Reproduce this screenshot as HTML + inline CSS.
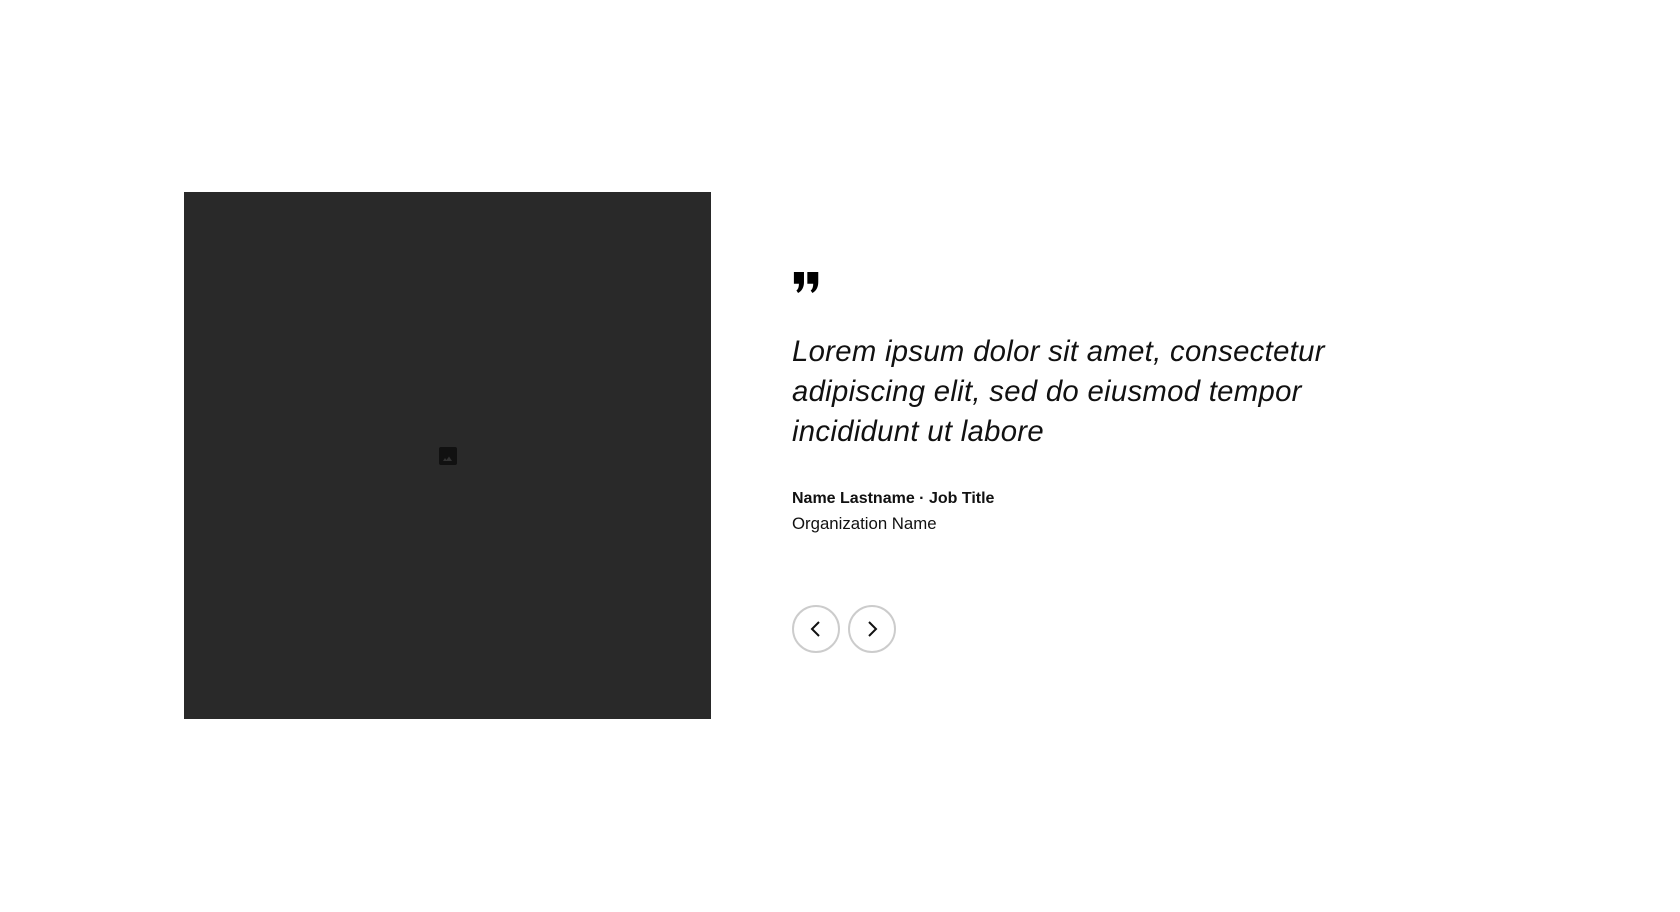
<!DOCTYPE html>
<html><head><style>
body{margin:0;width:1680px;height:912px;background:#fff;position:relative;overflow:hidden;font-family:"Liberation Sans",sans-serif;color:#111}
.box{position:absolute;left:184px;top:192px;width:527px;height:527px;background:#292929}
.ic{position:absolute;left:439px;top:447px;width:18px;height:18px;background:#111;border-radius:2px}
.q{position:absolute;left:792px;top:332px;font-style:italic;font-size:29.3px;line-height:40px;white-space:nowrap;letter-spacing:0.3px}
.n{position:absolute;left:792px;top:487px;font-weight:bold;font-size:16px;line-height:24px}
.o{position:absolute;left:792px;top:512px;font-size:16.8px;line-height:24px}
.b{position:absolute;top:605px;width:44px;height:44px;border:2px solid #ccc;border-radius:50%}
</style></head><body>
<div class="box"></div>
<div class="ic"><svg width="18" height="18" viewBox="0 0 18 18"><path d="M4 14l2-3 1.5 2L10 9.5 13 14z" fill="#333"/></svg></div>
<svg style="position:absolute;left:792px;top:272px" width="29" height="21" viewBox="0 0 30 25"><path d="M0 0h12v12q0 9-7 13l-2-3q3-2 3-8H0z" fill="#000"/><path d="M16 0h13v12q0 9-7 13l-2-3q3-2 3-8h-7z" fill="#000"/></svg>
<div class="q">Lorem ipsum dolor sit amet, consectetur<br>adipiscing elit, sed do eiusmod tempor<br>incididunt ut labore</div>
<div class="n">Name Lastname · Job Title</div>
<div class="o">Organization Name</div>
<div class="b" style="left:792px"><svg width="44" height="44" viewBox="0 0 44 44"><path d="M25 15l-7 7 7 7" fill="none" stroke="#111" stroke-width="2"/></svg></div>
<div class="b" style="left:848px"><svg width="44" height="44" viewBox="0 0 44 44"><path d="M19 15l7 7-7 7" fill="none" stroke="#111" stroke-width="2"/></svg></div>
</body></html>
